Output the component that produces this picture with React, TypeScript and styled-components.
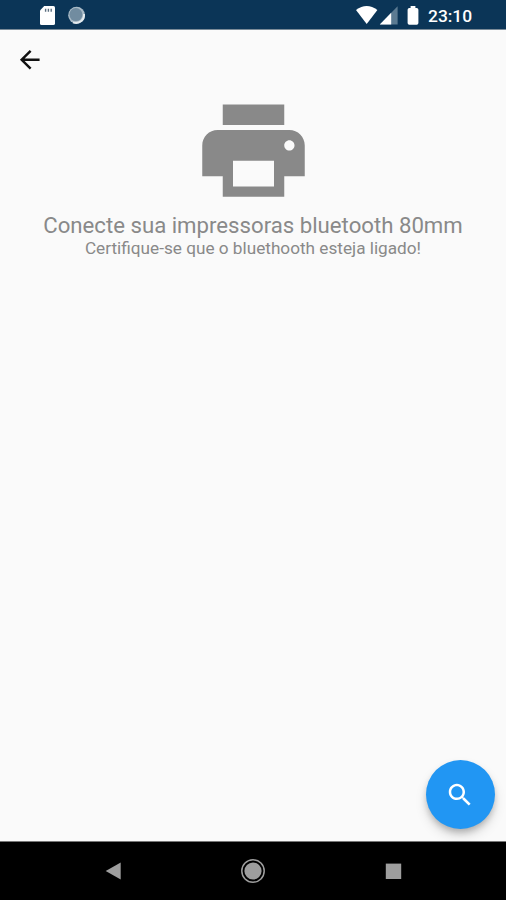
import React from "react";
import styled, { createGlobalStyle } from "styled-components";

const GlobalStyle = createGlobalStyle`
  *, *::before, *::after { box-sizing: border-box; }
  body { margin: 0; background: #fafafa; font-family: Roboto, sans-serif; }
`;

const Screen = styled.div`
  position: relative;
  display: flex;
  flex-direction: column;
  width: 506px;
  height: 900px;
  overflow: hidden;
  background: #fafafa;
`;

const StatusBar = styled.header`
  display: flex;
  justify-content: space-between;
  height: 30px;
  flex: none;
  background: #0b3557;
  border-bottom: 1px solid #7b8b98;
  padding: 0 33px 0 38px;
`;

const StatusGroup = styled.div`
  display: flex;
  align-items: flex-start;
`;

const Clock = styled.span`
  width: 45px;
  margin-left: 7px;
  padding-top: 6px;
  font-size: 17.4px;
  line-height: 20px;
  font-weight: 500;
  color: #fff;
  white-space: nowrap;
`;

const AppBar = styled.nav`
  display: flex;
  align-items: center;
  height: 59px;
  flex: none;
  padding: 1px 0 0 15px;
`;

const IconButton = styled.button`
  display: flex;
  padding: 0;
  border: 0;
  background: none;
  color: #111;
`;

const Content = styled.main`
  flex: 1;
  display: flex;
  flex-direction: column;
  align-items: center;
  color: #898989;
`;

const Title = styled.h1`
  margin: 0;
  font-size: 22.2px;
  line-height: 26px;
  font-weight: 400;
  white-space: nowrap;
`;

const Subtitle = styled.p`
  margin: 0;
  font-size: 17.2px;
  line-height: 20px;
  white-space: nowrap;
`;

const Fab = styled.button`
  position: absolute;
  right: 11.4px;
  bottom: 71px;
  display: flex;
  align-items: center;
  justify-content: center;
  width: 69px;
  height: 69px;
  padding: 0 1px 0 0;
  border: 0;
  border-radius: 50%;
  background: #2196f3;
  color: #fff;
  box-shadow: 0 4px 6px -1px rgba(0, 0, 0, 0.22), 0 7px 12px rgba(0, 0, 0, 0.13);
`;

const SystemNav = styled.footer`
  display: flex;
  align-items: center;
  justify-content: space-between;
  flex: none;
  height: 59px;
  padding: 0 104px 0 105px;
  border-top: 1px solid #777;
  background: #000;
`;

const PRINT =
  "M19 8H5c-1.66 0-3 1.34-3 3v6h4v4h12v-4h4v-6c0-1.66-1.34-3-3-3zm-3 11H8v-5h8v5zm3-7c-.55 0-1-.45-1-1s.45-1 1-1 1 .45 1 1-.45 1-1 1zm-1-9H6v4h12V3z";
const BACK = "M20 11H7.83l5.59-5.59L12 4l-8 8 8 8 1.41-1.41L7.83 13H20v-2z";
const SEARCH =
  "M15.5 14h-.79l-.28-.27C15.41 12.59 16 11.11 16 9.5 16 5.91 13.09 3 9.5 3S3 5.91 3 9.5 5.91 16 9.5 16c1.61 0 3.09-.59 4.23-1.57l.27.28v.79l5 4.99L20.49 19l-4.99-5zm-6 0C7.01 14 5 11.99 5 9.5S7.01 5 9.5 5 14 7.01 14 9.5 11.99 14 9.5 14z";

const Glyph = ({ d, size }: { d: string; size: number }) => (
  <svg width={size} height={size} viewBox="0 0 24 24" fill="currentColor" aria-hidden="true">
    <path d={d} />
  </svg>
);

const NotificationIcons = () => (
  <svg width="50" height="29" viewBox="0 0 50 29" aria-hidden="true">
    <path
      d="M6.2 6H15.4Q17 6 17 7.6V23.4Q17 25 15.4 25H3.6Q2 25 2 23.4V10.6Z"
      fill="#fff"
    />
    <path d="M7.6 8.8v3M10.4 8.8v3M13.2 8.8v3" stroke="#5c6f80" strokeWidth="1.4" />
    <circle cx="38.6" cy="15.2" r="8.4" fill="#a9bac6" />
    <path d="M46 14a8 8 0 0 1-11 8.3" fill="none" stroke="#e3eaee" strokeWidth="2" />
    <circle cx="37.9" cy="14.6" r="6.5" fill="#718ca0" />
  </svg>
);

const SignalIcons = () => (
  <svg width="66" height="29" viewBox="0 0 66 29" aria-hidden="true">
    <path d="M1 10Q11.7 2 22.4 10L11.7 24Z" fill="#fff" />
    <path d="M42.6 6.2V24.5H24.8Z" fill="#5c7b92" />
    <path d="M36.2 12.8V24.5H24.8Z" fill="#fff" />
    <path
      d="M55.6 6H60.4V8H61.7Q63.4 8 63.4 9.7V23.1Q63.4 24.8 61.7 24.8H54.3Q52.6 24.8 52.6 23.1V9.7Q52.6 8 54.3 8H55.6Z"
      fill="#fff"
    />
  </svg>
);

export default function App() {
  return (
    <>
      <GlobalStyle />
      <Screen>
        <StatusBar>
          <StatusGroup>
            <NotificationIcons />
          </StatusGroup>
          <StatusGroup>
            <SignalIcons />
            <Clock>23:10</Clock>
          </StatusGroup>
        </StatusBar>
        <AppBar>
          <IconButton aria-label="Voltar">
            <Glyph d={BACK} size={29.5} />
          </IconButton>
        </AppBar>
        <Content>
          <Glyph d={PRINT} size={123} />
          <Title>Conecte sua impressoras bluetooth 80mm</Title>
          <Subtitle>Certifique-se que o bluethooth esteja ligado!</Subtitle>
        </Content>
        <Fab aria-label="Buscar">
          <Glyph d={SEARCH} size={30} />
        </Fab>
        <SystemNav>
          <svg width="16" height="18" viewBox="0 0 16 18" aria-hidden="true">
            <path d="M0.7 9L15.7 0.5V17.5Z" fill="#9e9e9e" />
          </svg>
          <svg width="26" height="26" viewBox="0 0 26 26" aria-hidden="true">
            <circle cx="13" cy="13" r="11.2" fill="none" stroke="#9e9e9e" strokeWidth="1.5" />
            <circle cx="13" cy="13" r="8.6" fill="#9e9e9e" />
          </svg>
          <svg width="17" height="17" viewBox="0 0 17 17" aria-hidden="true">
            <rect x="0.8" y="0.6" width="15.4" height="15.4" fill="#9e9e9e" />
          </svg>
        </SystemNav>
      </Screen>
    </>
  );
}
